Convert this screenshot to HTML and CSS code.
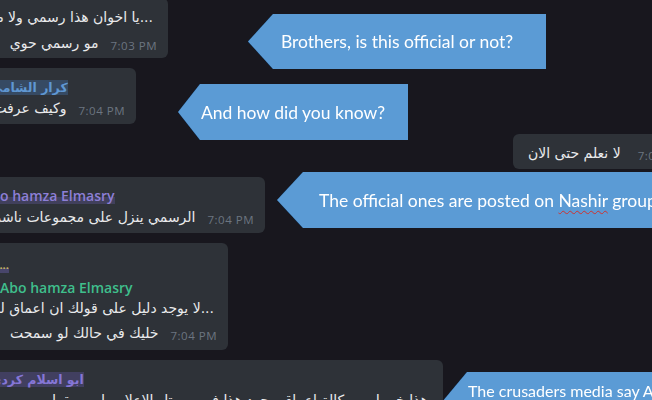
FILE: index.html
```html
<!DOCTYPE html>
<html lang="en">
<head>
<meta charset="utf-8">
<title>Chat</title>
<link rel="stylesheet" href="styles.css">
</head>
<body>
<main class="chat">
  <div class="msg in b1">
    <div class="line pad"><span class="ar">...يا اخوان هذا رسمي ولا مو رسمي</span></div>
    <div class="line l2"><span class="ar">مو رسمي حوي</span><span class="time">7:03 PM</span></div>
  </div>
  <div class="msg in b2">
    <div class="name blue"><span class="ar">كرار الشامي</span></div>
    <div class="line l2"><span class="ar">وكيف عرفت</span><span class="time">7:04 PM</span></div>
  </div>
  <div class="msg out b3">
    <div class="line"><span class="ar">لا نعلم حتى الان</span><span class="time">7:04 PM</span></div>
  </div>
  <div class="msg in b4">
    <div class="name purple">Abo hamza Elmasry</div>
    <div class="line l2"><span class="ar">الرسمي ينزل على مجموعات ناشر</span><span class="time">7:04 PM</span></div>
  </div>
  <div class="msg in b5">
    <div class="reply">
      <div class="dots">......</div>
      <div class="name green">Abo hamza Elmasry</div>
      <div class="line pad l3"><span class="ar">...لا يوجد دليل على قولك ان اعماق لديها</span></div>
    </div>
    <div class="line l4"><span class="ar">خليك في حالك لو سمحت</span><span class="time">7:04 PM</span></div>
  </div>
  <div class="msg in b6">
    <div class="name violet"><span class="ar">ابو اسلام كردي</span></div>
    <div class="line pad l2"><span class="ar">هذا خبر ليس بكالة اعماق مجرد هذا في صيرتل الاعلام ولبس يقطر</span></div>
  </div>
</main>

<div class="callout c1"><div class="shape"><span>Brothers, is this official or not?</span></div></div>
<div class="callout c2"><div class="shape"><span>And how did you know?</span></div></div>
<div class="callout c3"><div class="shape"><span>The official ones are posted on <span class="typo">Nashir</span> group</span></div></div>
<div class="callout c4"><div class="shape"><span>The crusaders media say Amaq</span></div></div>
</body>
</html>
```
FILE: styles.css
```css
html, body {
  margin: 0;
  padding: 0;
}
body {
  width: 652px;
  height: 400px;
  overflow: hidden;
  position: relative;
  background: #18171e;
  font-family: "Open Sans", "DejaVu Sans", sans-serif;
  color: #e6e7ea;
}
.chat {
  display: flex;
  flex-direction: column;
  gap: 10px;
  margin-top: -2px;
}
.msg {
  background: #2e3238;
  border-radius: 6px;
  margin-left: -24px;
  padding: 11px 11px 8px 14px;
  box-sizing: border-box;
}
.b1 { width: 192px; padding-bottom: 7px; }
.b2 { width: 160px; }
.b3 {
  align-self: flex-end;
  margin-left: 0;
  margin-right: -49px;
  width: 188px;
  padding: 11px 11px 8px 15px;
}
.b4 { width: 289px; margin-top: -2px; }
.b5 { width: 252px; padding-top: 14px; padding-bottom: 9px; }
.b6 { width: 467px; }

.line {
  display: flex;
  justify-content: flex-end;
  align-items: baseline;
  gap: 12px;
  height: 16px;
  line-height: 16px;
  white-space: nowrap;
}
.line.pad { padding-right: 4px; }
.b1 .l2 { margin-top: 10px; }
.l2 { margin-top: 5px; }
.l3 { margin-top: 4px; }
.l4 { margin-top: 9px; }
.b3 .line { gap: 17px; justify-content: flex-start; }

.ar {
  font-family: "DejaVu Sans", sans-serif;
  font-size: 14px;
  direction: rtl;
  flex-shrink: 0;
  color: #e9eaec;
}
.time {
  font-family: "Open Sans", sans-serif;
  font-size: 11.5px;
  letter-spacing: 0.5px;
  color: #6c7580;
  flex-shrink: 0;
  position: relative;
  top: 2px;
}
.name {
  height: 16px;
  line-height: 16px;
  font-size: 14px;
  font-weight: 600;
  white-space: nowrap;
}
.name .ar { font-weight: bold; font-size: 12.5px; }
.name.blue .ar { color: #5f97d2; background: rgba(70, 120, 180, 0.35); }
.name.purple {
  color: #8d7fd6;
  margin-left: -8px;
  width: fit-content;
  background: linear-gradient(transparent 55%, rgba(120, 105, 200, 0.25) 55%);
}
.name.green { color: #3fbf8c; margin-top: 7px; }
.name.violet .ar { color: #8576d6; background: rgba(110, 95, 190, 0.3); }

.reply {
  padding-left: 10px;
}
.dots {
  height: 16px;
  line-height: 16px;
  font-size: 11px;
  color: #c8b55e;
  font-weight: bold;
  margin-left: -10px;
  width: fit-content;
  background: linear-gradient(transparent 70%, rgba(120, 105, 200, 0.35) 70%);
}
.b5 .reply .line { padding-right: 3px; }

.callout {
  position: absolute;
  filter: drop-shadow(0 0 0.6px #0c2440) drop-shadow(0 0 0.6px #0c2440) drop-shadow(0 0 0.6px #0c2440);
}
.shape {
  height: 100%;
  box-sizing: border-box;
  background: #5b9bd5;
  color: #ffffff;
  font-family: Lato, "Open Sans", sans-serif;
  font-size: 17.5px;
  display: flex;
  align-items: center;
  justify-content: center;
  white-space: nowrap;
  clip-path: polygon(var(--tip) 0, 100% 0, 100% 100%, var(--tip) 100%, 0 50%);
}
.c1 { left: 248px; top: 14px; width: 298px; height: 55px; --tip: 25px; }
.c2 { left: 178px; top: 84px; width: 230px; height: 56px; --tip: 22px; }
.c3 { left: 277px; top: 172px; width: 430px; height: 56px; --tip: 26px; }
.c3 .shape { justify-content: flex-start; padding-left: 42px; }
.c4 { left: 442px; top: 372px; width: 260px; height: 60px; --tip: 25px; }
.c4 .shape { justify-content: flex-start; align-items: flex-start; padding-left: 26px; padding-top: 9px; font-size: 16px; }
.typo {
  text-decoration: underline wavy #d0312d;
  text-decoration-thickness: 1px;
  text-underline-offset: 3px;
}
```
